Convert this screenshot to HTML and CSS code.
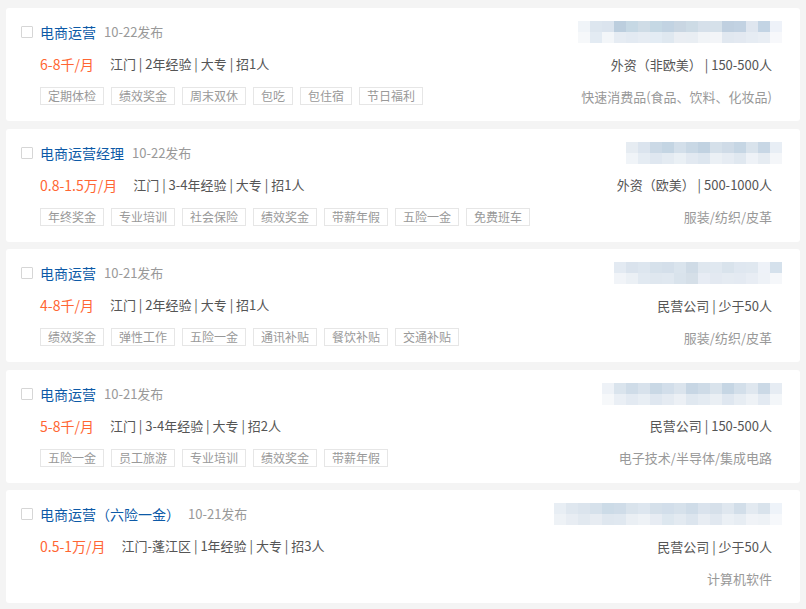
FILE: index.html
```html
<!DOCTYPE html>
<html lang="zh-CN">
<head>
  <meta charset="UTF-8" />
  <title>职位列表</title>
  <link rel="stylesheet" href="styles.css">
</head>
<body>

  <div class="job-list">

    <div class="job-card">
      <span class="check"></span>
      <div class="job-body">
        <div class="row row-top">
          <div class="title-line">
            <a class="job-title">电商运营</a>
            <span class="pub-date">10-22发布</span>
          </div>
          <div class="company-blur" data-cells="f0f4f8,dde6ef,dbe4ee,bccede,c6d8e4,cfdce6,c5d8e4,c2d3e2,c9d6e2,cddbe5,d6e0ea,d6e1ea,c0d0e0,c2d2e2,dfe6ef,c3d4e4,eef2f9|f6f8fa,e3ebf3,f3f6f9,e6ecf3,e3eaf2,e6ecf3,e3ecf4,dfe8f0,eaeef3,e9eef3,f1f4f7,f3f5f8,e1e8f0,e3e9f1,e6ecf3,e9eef4,f7f8fb"></div>
        </div>
        <div class="row row-mid">
          <div class="salary-line">
            <span class="salary">6-8千/月</span>
            <span class="job-info">江门 | 2年经验 | 大专 | 招1人</span>
          </div>
          <span class="company-type">外资（非欧美） | 150-500人</span>
        </div>
        <div class="row row-bottom">
          <div class="tags">
            <span class="tag">定期体检</span>
            <span class="tag">绩效奖金</span>
            <span class="tag">周末双休</span>
            <span class="tag">包吃</span>
            <span class="tag">包住宿</span>
            <span class="tag">节日福利</span>
          </div>
          <span class="industry">快速消费品(食品、饮料、化妆品)</span>
        </div>
      </div>
    </div>

    <div class="job-card">
      <span class="check"></span>
      <div class="job-body">
        <div class="row row-top">
          <div class="title-line">
            <a class="job-title">电商运营经理</a>
            <span class="pub-date">10-22发布</span>
          </div>
          <div class="company-blur" data-cells="e6ecf2,dbe4ee,cbd9e6,c4d5e3,d3dfea,c9d8e5,c1d2e1,d5e0ea,cfdbe7,c6d6e4,d9e3ec,c8d7e5,e8eef5|f0f4f8,e5ecf3,dfe7f0,e4ebf2,eaf0f5,e2e9f1,dde6ef,ebf0f5,e6ecf3,e0e8f0,eef2f7,e6ecf2,f4f6f9"></div>
        </div>
        <div class="row row-mid">
          <div class="salary-line">
            <span class="salary">0.8-1.5万/月</span>
            <span class="job-info">江门 | 3-4年经验 | 大专 | 招1人</span>
          </div>
          <span class="company-type">外资（欧美） | 500-1000人</span>
        </div>
        <div class="row row-bottom">
          <div class="tags">
            <span class="tag">年终奖金</span>
            <span class="tag">专业培训</span>
            <span class="tag">社会保险</span>
            <span class="tag">绩效奖金</span>
            <span class="tag">带薪年假</span>
            <span class="tag">五险一金</span>
            <span class="tag">免费班车</span>
          </div>
          <span class="industry">服装/纺织/皮革</span>
        </div>
      </div>
    </div>

    <div class="job-card">
      <span class="check"></span>
      <div class="job-body">
        <div class="row row-top">
          <div class="title-line">
            <a class="job-title">电商运营</a>
            <span class="pub-date">10-21发布</span>
          </div>
          <div class="company-blur" data-cells="e3eaf2,dae3ed,dde6ef,d6e1eb,d4dfea,dae4ed,cfdbe6,dfe7ef,e0e8f0,d9e3ec,dfe7f0,e0e8f0,eef2f8,d5e1ec|f1f4f8,ebf0f5,e1e9f1,dfe7ef,e0e8f0,d9e3ec,d5dfe8,e7ecf4,e3e9f1,e5ebf2,e4eaf2,e8edf4,eef2f7,f5f7fa"></div>
        </div>
        <div class="row row-mid">
          <div class="salary-line">
            <span class="salary">4-8千/月</span>
            <span class="job-info">江门 | 2年经验 | 大专 | 招1人</span>
          </div>
          <span class="company-type">民营公司 | 少于50人</span>
        </div>
        <div class="row row-bottom">
          <div class="tags">
            <span class="tag">绩效奖金</span>
            <span class="tag">弹性工作</span>
            <span class="tag">五险一金</span>
            <span class="tag">通讯补贴</span>
            <span class="tag">餐饮补贴</span>
            <span class="tag">交通补贴</span>
          </div>
          <span class="industry">服装/纺织/皮革</span>
        </div>
      </div>
    </div>

    <div class="job-card">
      <span class="check"></span>
      <div class="job-body">
        <div class="row row-top">
          <div class="title-line">
            <a class="job-title">电商运营</a>
            <span class="pub-date">10-21发布</span>
          </div>
          <div class="company-blur" data-cells="eef2f7,dae4ed,cfdce8,d8e2ec,c9d8e5,d2deea,dbe4ed,c7d6e4,cedbe7,d9e3ec,c6d6e4,d3dfea,dfe7ef,cbd9e6,e6ecf3|f6f8fa,eaeff5,e3eaf2,e8eef4,dfe7f0,e5ebf2,ecf0f5,e0e8f0,e4ebf2,eaeff4,dfe7f0,e7edf3,eef2f6,e3eaf2,f3f6f9"></div>
        </div>
        <div class="row row-mid">
          <div class="salary-line">
            <span class="salary">5-8千/月</span>
            <span class="job-info">江门 | 3-4年经验 | 大专 | 招2人</span>
          </div>
          <span class="company-type">民营公司 | 150-500人</span>
        </div>
        <div class="row row-bottom">
          <div class="tags">
            <span class="tag">五险一金</span>
            <span class="tag">员工旅游</span>
            <span class="tag">专业培训</span>
            <span class="tag">绩效奖金</span>
            <span class="tag">带薪年假</span>
          </div>
          <span class="industry">电子技术/半导体/集成电路</span>
        </div>
      </div>
    </div>

    <div class="job-card">
      <span class="check"></span>
      <div class="job-body">
        <div class="row row-top">
          <div class="title-line">
            <a class="job-title">电商运营（六险一金）</a>
            <span class="pub-date">10-21发布</span>
          </div>
          <div class="company-blur" data-cells="e8eef4,dfe7ef,dbe4ed,d6e1eb,ccdbe7,cfdce8,d9e3ec,dde6ef,d5e0ea,d2deea,d6e1eb,cfdce8,dae3ed,d6e0ea,dfe7ef,d2dee9,e3eaf1,d9e3ec,eef3f9|eef2f6,e8edf3,e2e9f0,e7ecf2,dfe7ef,e0e8f0,eaeff4,eef2f6,e7ecf3,dde7ef,e3eaf1,dce5ee,e8edf3,e1e8f0,ebf0f5,e7edf3,f0f3f7,eef2f6,f6f8fb"></div>
        </div>
        <div class="row row-mid">
          <div class="salary-line">
            <span class="salary">0.5-1万/月</span>
            <span class="job-info">江门-蓬江区 | 1年经验 | 大专 | 招3人</span>
          </div>
          <span class="company-type">民营公司 | 少于50人</span>
        </div>
        <div class="row row-bottom">
          <div class="tags"></div>
          <span class="industry">计算机软件</span>
        </div>
      </div>
    </div>

  </div>

  <script>
    // pixelated company name placeholder
    document.querySelectorAll(".company-blur").forEach(function (box) {
      box.dataset.cells.split("|").forEach(function (rowData) {
        const row = document.createElement("div");
        row.className = "blur-row";
        rowData.split(",").forEach(function (c) {
          const cell = document.createElement("span");
          cell.className = "blur-cell";
          cell.style.background = "#" + c;
          row.appendChild(cell);
        });
        box.appendChild(row);
      });
    });
  </script>
</body>
</html>
```

FILE: styles.css
```css
body {
  margin: 0;
  padding: 8px 6px;
  background: #f4f4f4;
  font-family: "Noto Sans CJK SC", "Noto Sans", sans-serif;
  color: #555;
}

.job-list {
  display: flex;
  flex-direction: column;
  gap: 7.5px;
}

.job-card {
  display: flex;
  box-sizing: border-box;
  height: 113px;
  padding: 13px 28px 0 15px;
  background: #fff;
  border-radius: 3px;
}

.check {
  flex: none;
  box-sizing: border-box;
  width: 12px;
  height: 12px;
  margin: 5px 7px 0 0;
  border: 1px solid #d6d6d6;
  border-radius: 1px;
}

.job-body {
  flex: 1;
  display: flex;
  flex-direction: column;
}

.row {
  display: flex;
  justify-content: space-between;
  align-items: center;
}

.row-top {
  height: 22px;
}

.row-mid {
  height: 20px;
  margin-top: 11px;
}

.row-bottom {
  height: 18px;
  margin-top: 13px;
}

.title-line {
  display: flex;
  align-items: center;
  gap: 8px;
  line-height: 20px;
}

.job-title {
  font-size: 14px;
  color: #0d5aa7;
}

.pub-date {
  font-size: 13px;
  color: #999;
}

/* blurred company name */
.company-blur {
  display: flex;
  flex-direction: column;
  margin-right: -10px;
}

.blur-row {
  display: flex;
}

.blur-cell {
  width: 12px;
  height: 11px;
}

.salary-line {
  display: flex;
  align-items: center;
  line-height: 20px;
}

.salary {
  font-size: 14px;
  color: #ff6633;
  margin-right: 16px;
}

.job-info,
.company-type {
  font-size: 13px;
  color: #555;
}

.tags {
  display: flex;
  gap: 7px;
}

.tag {
  box-sizing: border-box;
  height: 18px;
  padding: 0 7px;
  border: 1px solid #e6e6e6;
  font-size: 12px;
  line-height: 16px;
  color: #999;
}

.industry {
  font-size: 13px;
  color: #999;
}
```
